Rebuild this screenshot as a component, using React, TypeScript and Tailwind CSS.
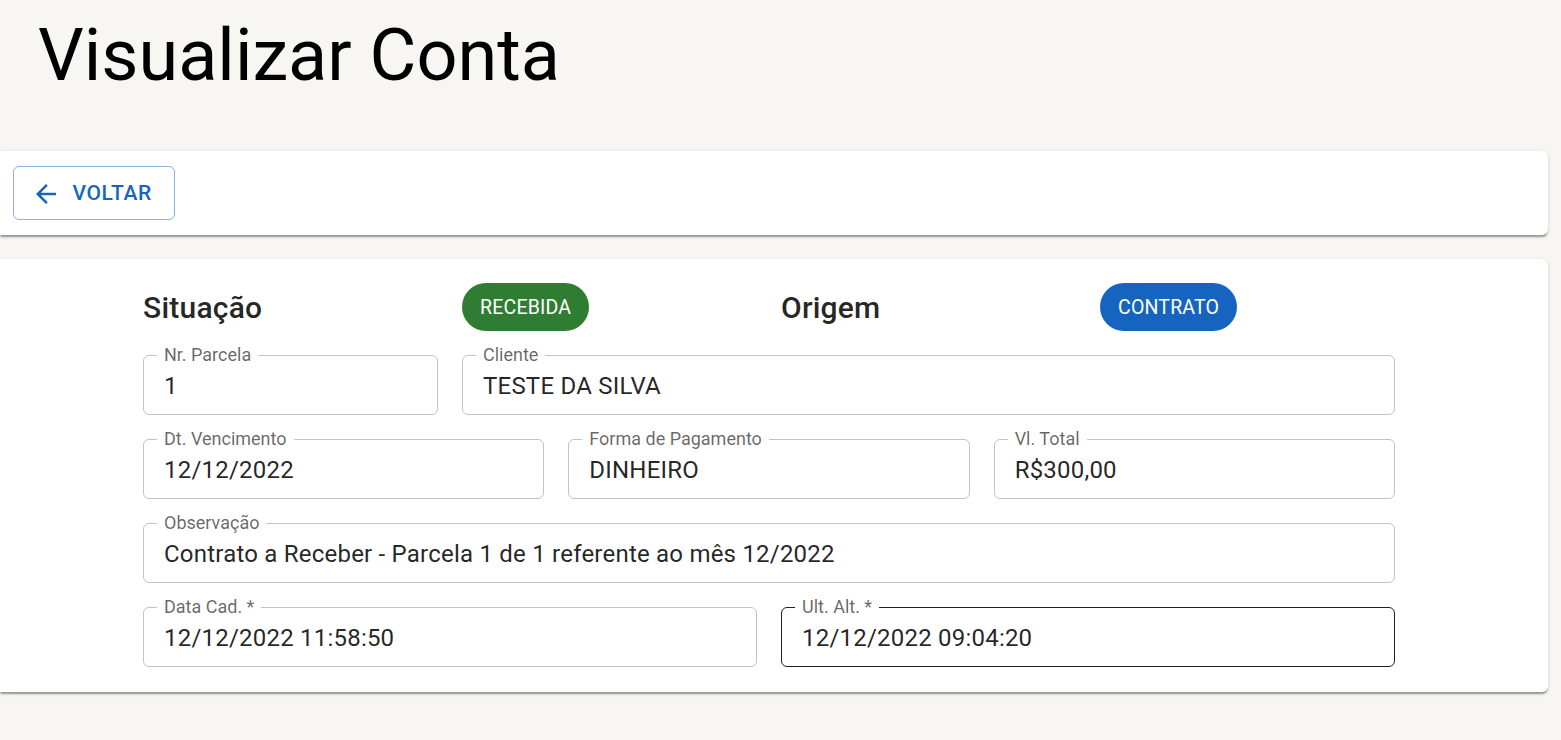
import React from "react";

type Field = { label: string; value: string; span: string; active?: boolean };

const fields: Field[] = [
  { label: "Nr. Parcela", value: "1", span: "col-span-3" },
  { label: "Cliente", value: "TESTE DA SILVA", span: "col-span-9" },
  { label: "Dt. Vencimento", value: "12/12/2022", span: "col-span-4" },
  { label: "Forma de Pagamento", value: "DINHEIRO", span: "col-span-4" },
  { label: "Vl. Total", value: "R$300,00", span: "col-span-4" },
  { label: "Observação", value: "Contrato a Receber - Parcela 1 de 1 referente ao mês 12/2022", span: "col-span-12" },
  { label: "Data Cad. *", value: "12/12/2022 11:58:50", span: "col-span-6" },
  { label: "Ult. Alt. *", value: "12/12/2022 09:04:20", span: "col-span-6", active: true },
];

const paper =
  "bg-white rounded-r-[6px] mr-[13px] shadow-[0_3px_1.5px_-1.5px_rgba(0,0,0,0.2),0_1.5px_1.5px_0_rgba(0,0,0,0.14),0_1.5px_4.5px_0_rgba(0,0,0,0.12)]";

function OutlinedField({ f }: { f: Field }) {
  return (
    <div className={`${f.span} relative`}>
      <div
        className={`h-[60px] rounded-[6px] border flex items-center px-[20px] pt-[3px] ${
          f.active ? "border-[rgba(0,0,0,0.87)]" : "border-[#c4c4c4]"
        }`}
      >
        <span className="text-[24px] leading-[34.5px] tracking-[0.009em] text-[rgba(0,0,0,0.87)] whitespace-nowrap">
          {f.value}
        </span>
      </div>
      {/* label sobre a borda */}
      <span className="absolute left-[14px] top-[-13px] px-[7px] bg-white text-[18px] leading-[26px] text-[rgba(0,0,0,0.6)] whitespace-nowrap">
        {f.label}
      </span>
    </div>
  );
}

function Chip({ label, color }: { label: string; color: string }) {
  return (
    <span
      className={`inline-flex items-center h-[48px] rounded-full px-[18px] pt-[2px] text-[19.5px] text-white tracking-[0.01em] ${color}`}
    >
      {label}
    </span>
  );
}

export default function App() {
  return (
    <div className="min-h-[740px] bg-[#f7f6f3] font-['Roboto',sans-serif] pb-6">
      <h1 className="pl-[38px] pt-[14px] text-[72px] leading-[84px] font-normal text-black">
        Visualizar Conta
      </h1>

      <div className={`${paper} mt-[53px] px-[13px] py-[15px]`}>
        <button className="flex items-center h-[54px] pl-[16.5px] pr-[22.5px] pt-[1px] rounded-[6px] border border-[rgba(21,101,192,0.5)] text-[#1565c0] text-[21px] font-medium tracking-[0.029em] uppercase">
          <svg viewBox="0 0 24 24" className="w-[30px] h-[30px] mr-[12px] fill-current">
            <path d="M20 11H7.83l5.59-5.59L12 4l-8 8 8 8 1.41-1.41L7.83 13H20v-2z" />
          </svg>
          Voltar
        </button>
      </div>

      <div className={`${paper} mt-[24px] pt-[24px] pb-[25px]`}>
        <div className="ml-[143px] w-[1252px] grid grid-cols-12 gap-x-[24px] gap-y-[24px]">
          <div className="col-span-3 flex items-center h-[48px]">
            <span className="text-[30px] font-medium tracking-[0.0075em] text-[rgba(0,0,0,0.87)]">Situação</span>
          </div>
          <div className="col-span-3 flex items-center">
            <Chip label="RECEBIDA" color="bg-[#2e7d32]" />
          </div>
          <div className="col-span-3 flex items-center">
            <span className="text-[30px] font-medium tracking-[0.0075em] text-[rgba(0,0,0,0.87)]">Origem</span>
          </div>
          <div className="col-span-3 flex items-center">
            <Chip label="CONTRATO" color="bg-[#1565c0]" />
          </div>
          {fields.map((f) => (
            <OutlinedField key={f.label} f={f} />
          ))}
        </div>
      </div>
    </div>
  );
}
